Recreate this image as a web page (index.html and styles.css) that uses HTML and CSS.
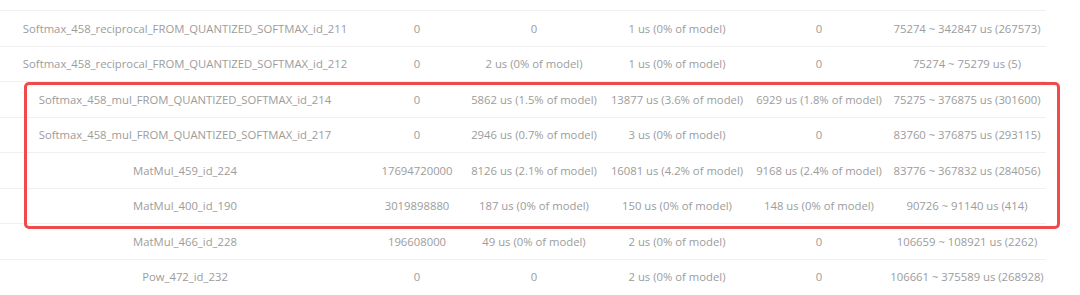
FILE: index.html
```html
<!DOCTYPE html>
<html>
<head>
<meta charset="utf-8">
<link rel="stylesheet" href="styles.css">
</head>
<body>
<div class="page">
  <div class="table">
    <div class="row">
      <div class="cell c1">Softmax_458_reciprocal_FROM_QUANTIZED_SOFTMAX_id_211</div>
      <div class="cell">0</div>
      <div class="cell">0</div>
      <div class="cell">1 us (0% of model)</div>
      <div class="cell">0</div>
      <div class="cell">75274 ~ 342847 us (267573)</div>
    </div>
    <div class="row">
      <div class="cell c1">Softmax_458_reciprocal_FROM_QUANTIZED_SOFTMAX_id_212</div>
      <div class="cell">0</div>
      <div class="cell">2 us (0% of model)</div>
      <div class="cell">1 us (0% of model)</div>
      <div class="cell">0</div>
      <div class="cell">75274 ~ 75279 us (5)</div>
    </div>
    <div class="row">
      <div class="cell c1">Softmax_458_mul_FROM_QUANTIZED_SOFTMAX_id_214</div>
      <div class="cell">0</div>
      <div class="cell">5862 us (1.5% of model)</div>
      <div class="cell">13877 us (3.6% of model)</div>
      <div class="cell">6929 us (1.8% of model)</div>
      <div class="cell">75275 ~ 376875 us (301600)</div>
    </div>
    <div class="row">
      <div class="cell c1">Softmax_458_mul_FROM_QUANTIZED_SOFTMAX_id_217</div>
      <div class="cell">0</div>
      <div class="cell">2946 us (0.7% of model)</div>
      <div class="cell">3 us (0% of model)</div>
      <div class="cell">0</div>
      <div class="cell">83760 ~ 376875 us (293115)</div>
    </div>
    <div class="row">
      <div class="cell c1">MatMul_459_id_224</div>
      <div class="cell">17694720000</div>
      <div class="cell">8126 us (2.1% of model)</div>
      <div class="cell">16081 us (4.2% of model)</div>
      <div class="cell">9168 us (2.4% of model)</div>
      <div class="cell">83776 ~ 367832 us (284056)</div>
    </div>
    <div class="row">
      <div class="cell c1">MatMul_400_id_190</div>
      <div class="cell">3019898880</div>
      <div class="cell">187 us (0% of model)</div>
      <div class="cell">150 us (0% of model)</div>
      <div class="cell">148 us (0% of model)</div>
      <div class="cell">90726 ~ 91140 us (414)</div>
    </div>
    <div class="row">
      <div class="cell c1">MatMul_466_id_228</div>
      <div class="cell">196608000</div>
      <div class="cell">49 us (0% of model)</div>
      <div class="cell">2 us (0% of model)</div>
      <div class="cell">0</div>
      <div class="cell">106659 ~ 108921 us (2262)</div>
    </div>
    <div class="row">
      <div class="cell c1">Pow_472_id_232</div>
      <div class="cell">0</div>
      <div class="cell">0</div>
      <div class="cell">2 us (0% of model)</div>
      <div class="cell">0</div>
      <div class="cell">106661 ~ 375589 us (268928)</div>
    </div>
  </div>
  <div class="highlight"></div>
</div>
</body>
</html>
```

FILE: styles.css
```css
html, body {
  margin: 0;
  padding: 0;
  background: #ffffff;
}

.page {
  position: relative;
  width: 1080px;
  height: 295px;
  overflow: hidden;
  padding-top: 10px;
  box-sizing: border-box;
}

.table {
  width: 1046px;
  font-family: "Open Sans", "Noto Sans", sans-serif;
  font-size: 11.3px;
  color: #9c9c9c;
}

.row {
  display: grid;
  grid-template-columns: 370px 94px 140px 146px 138px 158px;
  height: 35.5px;
  box-sizing: border-box;
  border-top: 1px solid #f0f0f0;
  align-items: center;
}

.cell {
  text-align: center;
  white-space: nowrap;
}

.highlight {
  position: absolute;
  left: 24px;
  top: 82px;
  width: 1036px;
  height: 147px;
  box-sizing: border-box;
  border: 3px solid #f04a4a;
  border-radius: 5px;
}
```
